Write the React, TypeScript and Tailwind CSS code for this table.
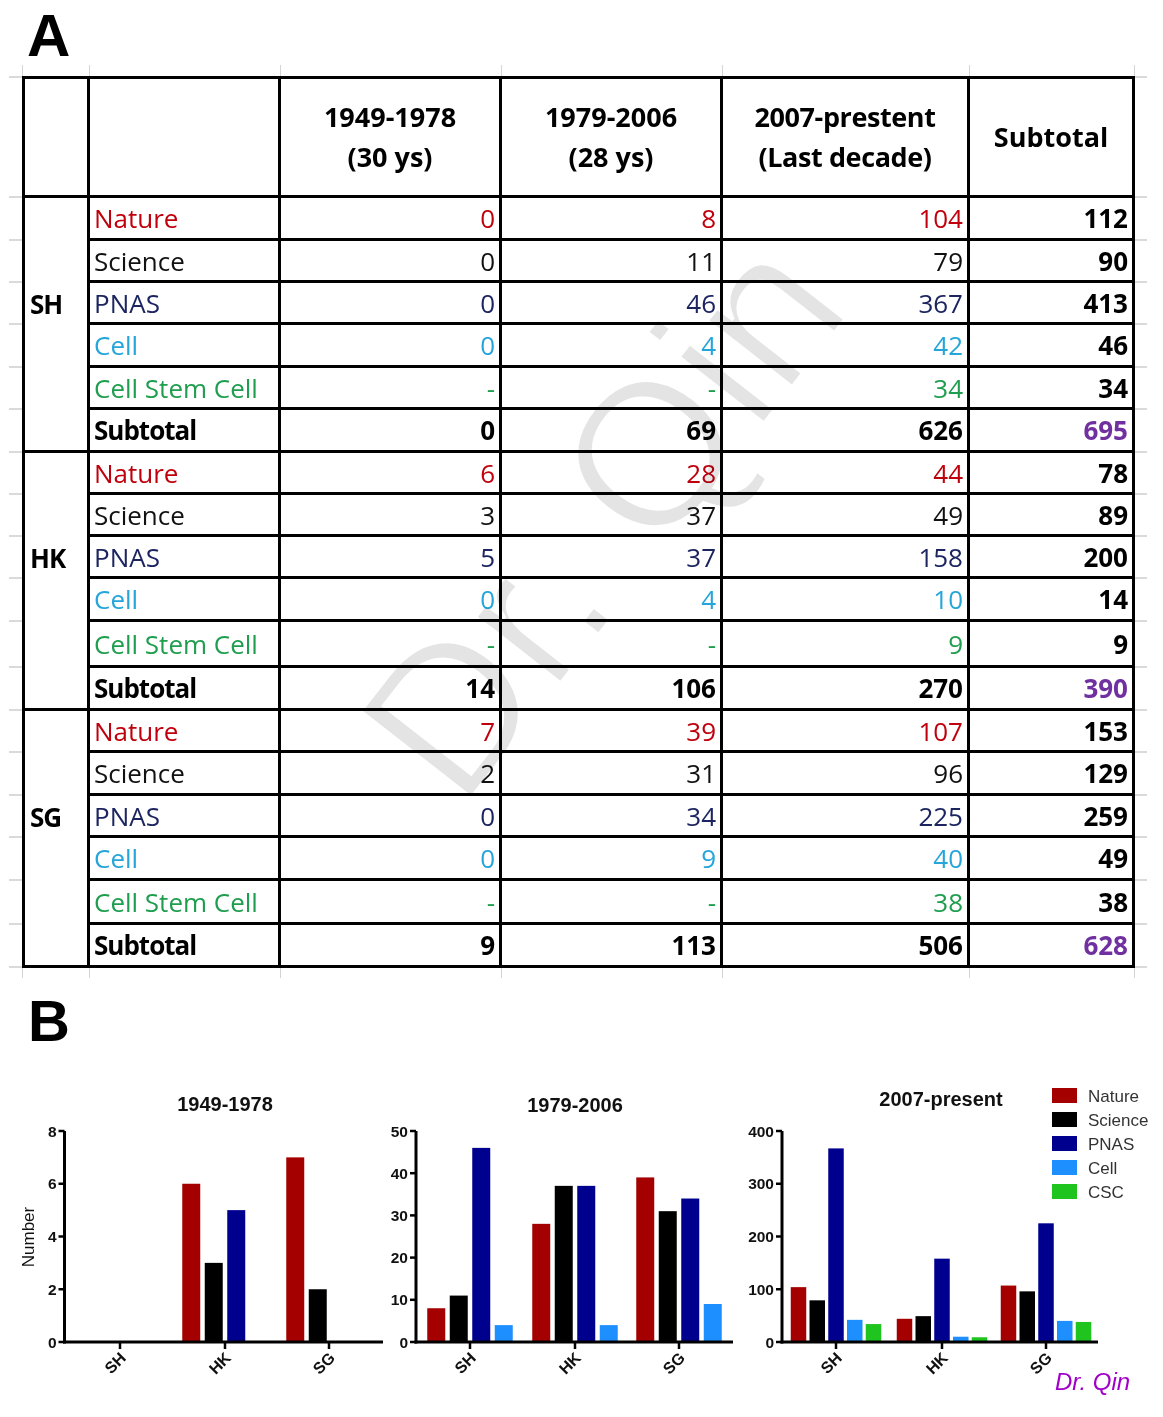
const tone = {
  nature: 'text-[#c0000c]',
  science: 'text-[#111111]',
  pnas: 'text-[#1c2560]',
  cell: 'text-[#25a5d9]',
  csc: 'text-[#1f9e4f]',
};

const journals = [
  { name: 'Nature', cls: tone.nature },
  { name: 'Science', cls: tone.science },
  { name: 'PNAS', cls: tone.pnas },
  { name: 'Cell', cls: tone.cell },
  { name: 'Cell Stem Cell', cls: tone.csc },
];

const groups = [
  {
    label: 'SH',
    vals: [
      ['0', '8', '104', '112'],
      ['0', '11', '79', '90'],
      ['0', '46', '367', '413'],
      ['0', '4', '42', '46'],
      ['-', '-', '34', '34'],
    ],
    sub: ['0', '69', '626', '695'],
    hs: ['h-[43px]', 'h-[42px]', 'h-[42px]', 'h-[43px]', 'h-[42px]', 'h-[43px]'],
  },
  {
    label: 'HK',
    vals: [
      ['6', '28', '44', '78'],
      ['3', '37', '49', '89'],
      ['5', '37', '158', '200'],
      ['0', '4', '10', '14'],
      ['-', '-', '9', '9'],
    ],
    sub: ['14', '106', '270', '390'],
    hs: ['h-[42px]', 'h-[42px]', 'h-[42px]', 'h-[43px]', 'h-[46px]', 'h-[43px]'],
  },
  {
    label: 'SG',
    vals: [
      ['7', '39', '107', '153'],
      ['2', '31', '96', '129'],
      ['0', '34', '225', '259'],
      ['0', '9', '40', '49'],
      ['-', '-', '38', '38'],
    ],
    sub: ['9', '113', '506', '628'],
    hs: ['h-[42px]', 'h-[43px]', 'h-[42px]', 'h-[43px]', 'h-[44px]', 'h-[43px]'],
  },
];

const valW = ['w-[221px]', 'w-[221px]', 'w-[247px]'];

const Gutter = ({ top }: { top?: boolean }) => (
  <div className={`shrink-0 border-b-2 border-[#dadada] ${top ? 'border-t-2' : ''} w-[13px]`} />
);
const GutterR = ({ top }: { top?: boolean }) => (
  <div className={`shrink-0 border-b-2 border-[#dadada] ${top ? 'border-t-2' : ''} w-[12px]`} />
);

const TickRow = ({ h }: { h: string }) => (
  <div className={`flex ${h}`}>
    <div className="w-[13px] shrink-0" />
    <div className="w-[68px] shrink-0 border-l border-r border-[#d4d4d4]" />
    <div className="w-[191px] shrink-0 border-r border-[#d4d4d4]" />
    <div className="w-[221px] shrink-0 border-r border-[#d4d4d4]" />
    <div className="w-[221px] shrink-0 border-r border-[#d4d4d4]" />
    <div className="w-[247px] shrink-0 border-r border-[#d4d4d4]" />
    <div className="w-[165px] shrink-0 border-r border-[#d4d4d4]" />
  </div>
);

const DataRow = ({
  h,
  label,
  last,
  name,
  cls,
  vals,
  sub,
}: {
  h: string;
  label?: string;
  last?: boolean;
  name: string;
  cls: string;
  vals: string[];
  sub?: boolean;
}) => (
  <div className={`flex ${h}`}>
    <Gutter />
    <div
      className={`w-[68px] shrink-0 border-l-[3px] border-r-[3px] border-black ${last ? 'border-b-[3px]' : ''} flex items-center pl-[5px] font-bold tracking-[-1px] text-black`}
    >
      {label}
    </div>
    <div
      className={`w-[191px] shrink-0 border-r-[3px] border-b-[3px] border-black flex items-center pl-[4px] ${sub ? 'font-bold tracking-[-1px] text-black' : cls}`}
    >
      {name}
    </div>
    {vals.slice(0, 3).map((v, i) => (
      <div
        key={i}
        className={`${valW[i]} shrink-0 border-r-[3px] border-b-[3px] border-black flex items-center justify-end pr-[4px] ${sub ? 'font-bold text-black' : cls}`}
      >
        {v}
      </div>
    ))}
    <div
      className={`w-[165px] shrink-0 border-r-[3px] border-b-[3px] border-black flex items-center justify-end pr-[4px] font-bold ${sub ? 'text-[#7030a0]' : 'text-black'}`}
    >
      {vals[3]}
    </div>
    <GutterR />
  </div>
);

const head = 'shrink-0 border-t-[3px] border-r-[3px] border-b-[3px] border-black flex flex-col items-center justify-center font-bold text-[27px] leading-[40px] text-black';

const Table = () => (
  <div className="font-['Open_Sans',sans-serif] text-[26px] leading-none">
    <TickRow h="h-[11px]" />
    <div className="flex h-[122px]">
      <Gutter top />
      <div className={`w-[68px] border-l-[3px] ${head}`} />
      <div className={`w-[191px] ${head}`} />
      <div className={`w-[221px] ${head}`}>
        <span>1949-1978</span>
        <span>(30 ys)</span>
      </div>
      <div className={`w-[221px] ${head}`}>
        <span>1979-2006</span>
        <span>(28 ys)</span>
      </div>
      <div className={`w-[247px] ${head}`}>
        <span className="tracking-[-0.4px]">2007-prestent</span>
        <span className="tracking-[-0.4px]">(Last decade)</span>
      </div>
      <div className={`w-[165px] ${head}`}>
        <span>Subtotal</span>
      </div>
      <GutterR top />
    </div>
    {groups.map((g) => (
      <div key={g.label}>
        {journals.map((j, i) => (
          <DataRow
            key={j.name}
            h={g.hs[i]}
            label={i === 2 ? g.label : undefined}
            name={j.name}
            cls={j.cls}
            vals={g.vals[i]}
          />
        ))}
        <DataRow h={g.hs[5]} last name="Subtotal" cls="" vals={g.sub} sub />
      </div>
    ))}
    <TickRow h="h-[10px]" />
  </div>
);

const COLORS = ['#a40000', '#000000', '#00008f', '#1e8fff', '#1fc41f'];
const FONT = "'Liberation Sans', Arial, sans-serif";
const Y0 = 1342;
const YT = 1131;

type ChartProps = {
  vx: number;
  vw: number;
  title: string;
  tx: number;
  ty: number;
  ax: number;
  ar: number;
  max: number;
  ticks: number[];
  cats: number[];
  step: number;
  bw: number;
  data: number[][];
  children?: React.ReactNode;
};

const BarChart = ({ vx, vw, title, tx, ty, ax, ar, max, ticks, cats, step, bw, data, children }: ChartProps) => {
  const k = (Y0 - YT) / max;
  return (
    <svg width={vw} height={337} viewBox={`${vx} 1080 ${vw} 337`} className="block shrink-0" fontFamily={FONT}>
      <text x={tx} y={ty} textAnchor="middle" fontSize={20} fontWeight="bold" fill="#111">
        {title}
      </text>
      {data.map((grp, gi) =>
        grp.map((v, si) => {
          if (!v) return null;
          const x = cats[gi] + (si - (grp.length - 1) / 2) * step - bw / 2;
          const h = v * k;
          return <rect key={`${gi}-${si}`} x={x} y={Y0 - h} width={bw} height={h} fill={COLORS[si]} />;
        }),
      )}
      <line x1={ax} y1={YT} x2={ax} y2={Y0 + 1.5} stroke="#000" strokeWidth={3} />
      <line x1={ax - 1.5} y1={Y0} x2={ar} y2={Y0} stroke="#000" strokeWidth={3} />
      {ticks.map((t) => {
        const y = Y0 - t * k;
        return (
          <g key={t}>
            <line x1={ax - 6} y1={y} x2={ax} y2={y} stroke="#000" strokeWidth={2.5} />
            <text x={ax - 8} y={y + 5.5} textAnchor="end" fontSize={15.5} fontWeight="bold" fill="#111">
              {t}
            </text>
          </g>
        );
      })}
      {cats.map((cx, i) => (
        <g key={cx}>
          <line x1={cx} y1={Y0} x2={cx} y2={Y0 + 7} stroke="#000" strokeWidth={2.5} />
          <text
            transform={`translate(${cx + 3} ${Y0 + 13}) rotate(-45)`}
            textAnchor="end"
            dy="0.35em"
            fontSize={16}
            fontWeight="bold"
            fill="#111"
          >
            {['SH', 'HK', 'SG'][i]}
          </text>
        </g>
      ))}
      {children}
    </svg>
  );
};

const Legend = () => (
  <g>
    {['Nature', 'Science', 'PNAS', 'Cell', 'CSC'].map((n, i) => (
      <g key={n}>
        <rect x={1052} y={1088 + i * 24} width={25} height={15} fill={COLORS[i]} />
        <text x={1088} y={1102 + i * 24} fontSize={17} fill="#333">
          {n}
        </text>
      </g>
    ))}
    <text x={1055} y={1390} fontSize={24} fontStyle="italic" fill="#a000c8">
      Dr. Qin
    </text>
  </g>
);

export default function App() {
  return (
    <div className="relative w-[1163px] h-[1417px] overflow-hidden bg-white pt-[6px] pl-[9px]">
      <div className="ml-[18px] h-[59px] font-['Liberation_Sans',Arial,sans-serif] text-[60px] font-bold leading-none text-black">
        A
      </div>
      <Table />
      <div className="ml-[19px] mt-[14px] h-[58px] font-['Liberation_Sans',Arial,sans-serif] text-[58px] font-bold leading-none text-black">
        B
      </div>
      <div className="-ml-[9px] mt-[30px] flex">
        <BarChart
          vx={0}
          vw={385}
          title="1949-1978"
          tx={225}
          ty={1111}
          ax={64.5}
          ar={383}
          max={8}
          ticks={[0, 2, 4, 6, 8]}
          cats={[120, 225, 329]}
          step={22.5}
          bw={18}
          data={[
            [0, 0, 0, 0],
            [6, 3, 5, 0],
            [7, 2, 0, 0],
          ]}
        >
          <text transform="translate(34 1237) rotate(-90)" textAnchor="middle" fontSize={17} fill="#111">
            Number
          </text>
        </BarChart>
        <BarChart
          vx={385}
          vw={360}
          title="1979-2006"
          tx={575}
          ty={1112}
          ax={416}
          ar={733}
          max={50}
          ticks={[0, 10, 20, 30, 40, 50]}
          cats={[470, 575, 679]}
          step={22.5}
          bw={18}
          data={[
            [8, 11, 46, 4],
            [28, 37, 37, 4],
            [39, 31, 34, 9],
          ]}
        />
        <BarChart
          vx={745}
          vw={418}
          title="2007-present"
          tx={941}
          ty={1106}
          ax={782}
          ar={1098}
          max={400}
          ticks={[0, 100, 200, 300, 400]}
          cats={[836, 942, 1046]}
          step={18.75}
          bw={15.5}
          data={[
            [104, 79, 367, 42, 34],
            [44, 49, 158, 10, 9],
            [107, 96, 225, 40, 38],
          ]}
        >
          <Legend />
        </BarChart>
      </div>
      <div className="pointer-events-none absolute left-[601px] top-[516px] -translate-x-1/2 -translate-y-1/2 rotate-[-52deg] whitespace-nowrap font-['Liberation_Sans',Arial,sans-serif] text-[205px] leading-none text-[#e4e4e4] mix-blend-multiply [-webkit-text-stroke:4px_white]">
        Dr. Qin
      </div>
    </div>
  );
}
